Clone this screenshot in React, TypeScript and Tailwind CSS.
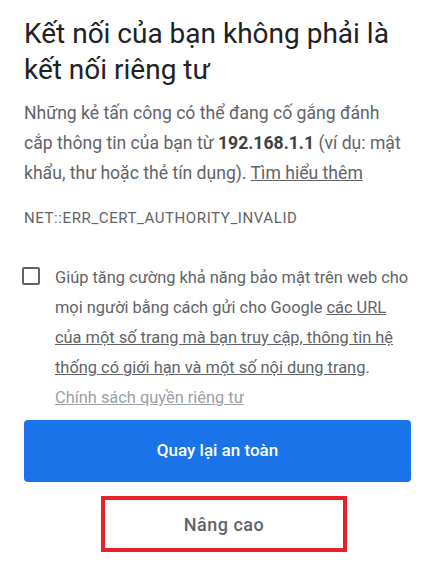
export default function App() {
  return (
    <div
      className="w-[435px] h-[563px] bg-white overflow-hidden px-6 pt-[16px]"
      style={{ fontFamily: "Roboto, 'Noto Sans', sans-serif" }}
    >
      <h1 className="text-[28px] leading-[36px] text-[#202124] font-normal">
        Kết nối của bạn không phải là kết nối riêng tư
      </h1>
      <p className="mt-[10px] text-[17.6px] leading-[30px] text-[#5f6368]">
        Những kẻ tấn công có thể đang cố gắng đánh cắp thông tin của bạn từ{" "}
        <b className="font-bold text-[#3c4043]">192.168.1.1</b> (ví dụ: mật khẩu, thư hoặc thẻ tín dụng).{" "}
        <a className="underline text-[#5f6368]">Tìm hiểu thêm</a>
      </p>
      <p className="mt-[20px] text-[15px] tracking-[0.6px] leading-[20px] text-[#5f6368]">NET::ERR_CERT_AUTHORITY_INVALID</p>
      <div className="mt-[35px] flex">
        <div className="w-[31px] shrink-0 pt-[4px]">
          <div className="w-[18px] h-[18px] border-2 border-[#5f6368] rounded-[2px] -ml-[2px]" />
        </div>
        <p className="text-[16.4px] leading-[30px] text-[#5f6368]">
          Giúp tăng cường khả năng bảo mật trên web cho mọi người bằng cách gửi cho Google{" "}
          <a className="underline">các URL của một số trang mà bạn truy cập, thông tin hệ thống có giới hạn và một số nội dung trang</a>.{" "}
          <a className="underline text-[#9aa0a6]">Chính sách quyền riêng tư</a>
        </p>
      </div>
      <button className="mt-[7px] w-full h-[62px] rounded-[4px] bg-[#1a73e8] text-white text-[17px] font-medium">
        Quay lại an toàn
      </button>
      <div className="mt-[14px] flex">
        <button className="ml-[77px] w-[246px] h-[56px] border-[4px] border-[#e8202a] text-[#5f6368] text-[18px] tracking-[0.5px] font-medium">
          Nâng cao
        </button>
      </div>
    </div>
  );
}
